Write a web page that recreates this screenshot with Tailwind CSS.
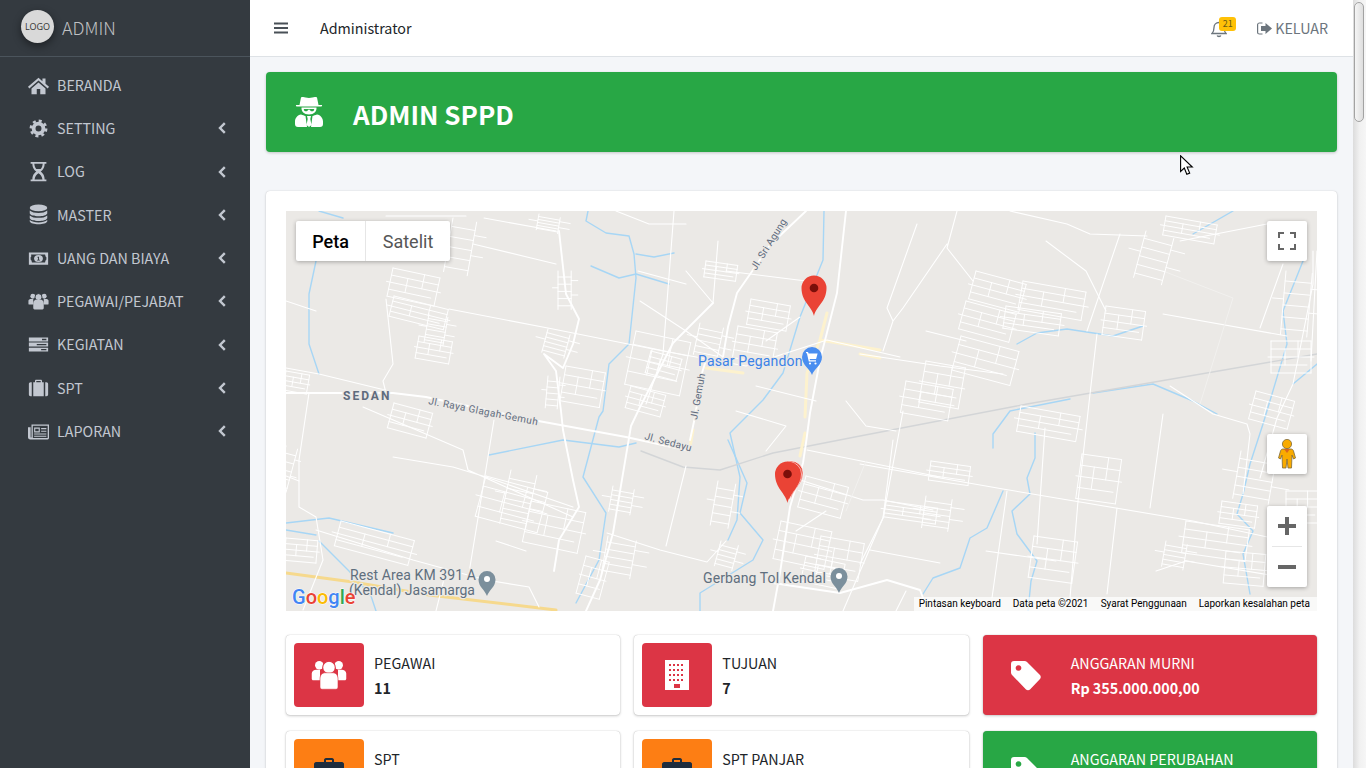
<!DOCTYPE html>
<html lang="id">
<head>
  <meta charset="UTF-8">
  <title>Admin SPPD</title>
  <script src="https://cdn.jsdelivr.net/npm/@tailwindcss/browser@4"></script>
</head>
<body class="bg-[#f4f6f9] font-['Noto_Sans_CJK_JP',sans-serif] text-[#212529] overflow-hidden">
  <div class="flex h-screen overflow-hidden relative">
    <!-- Sidebar -->
    <aside class="w-[250px] shrink-0 bg-[#343a40] text-[#c2c7d0] flex flex-col">
      <div class="h-[57px] shrink-0 border-b border-[#4b545c] flex items-center pl-[21px]">
        <div class="w-[33px] h-[33px] -mt-[3px] rounded-full bg-[#d9d9d9] shadow-[0_3px_8px_rgba(0,0,0,0.45)] flex items-center justify-center text-[9px] leading-none text-[#333] font-['Open_Sans',sans-serif]">LOGO</div>
        <span class="ml-2 text-[17.8px] leading-none font-light text-white/70">ADMIN</span>
      </div>
      <nav class="pt-[6.5px] text-[14.3px]">
        <a class="h-[43.25px] flex items-center pl-[28px]">
          <svg class="w-[21px] h-[21px]" viewBox="0 0 24 24" fill="currentColor"><path d="M12 3 0 13.5l1.5 1.8L12 6.2l10.5 9.1 1.5-1.8-4-3.5V4h-3.5v3z"/><path d="M4 15.5 12 8.6l8 6.9V22h-6v-6h-4v6H4z"/></svg>
          <span class="ml-2 leading-none">BERANDA</span>
        </a>
        <a class="h-[43.25px] flex items-center pl-[28px]">
          <svg class="w-[21px] h-[21px]" viewBox="0 0 24 24" fill="none" stroke="currentColor"><circle cx="12" cy="12" r="5.6" stroke-width="4.4"/><circle cx="12" cy="12" r="8.7" stroke-width="3" stroke-dasharray="3.4 3.43"/></svg>
          <span class="ml-2 leading-none">SETTING</span>
          <svg class="ml-auto mr-[24px] w-2 h-3" viewBox="0 0 8 12" fill="none" stroke="currentColor" stroke-width="2.4"><path d="M6.8 1.2 2 6l4.8 4.8"/></svg>
        </a>
        <a class="h-[43.25px] flex items-center pl-[28px]">
          <svg class="w-[21px] h-[21px]" viewBox="0 0 24 24" fill="currentColor" fill-rule="evenodd"><path d="M3 1h18v2h-2c0 5-2.5 7.5-4.5 9 2 1.5 4.5 4 4.5 9h2v2H3v-2h2c0-5 2.5-7.500 4.500-9C7.500 10.500 5 8 5 3H3zm4.200 2c.2 2.500 1 4.500 2.300 6h5c1.300-1.500 2.100-3.500 2.300-6zM12 14c-2 1.200-4 3.500-4.500 7h9c-.5-3.500-2.500-5.800-4.500-7z"/></svg>
          <span class="ml-2 leading-none">LOG</span>
          <svg class="ml-auto mr-[24px] w-2 h-3" viewBox="0 0 8 12" fill="none" stroke="currentColor" stroke-width="2.4"><path d="M6.8 1.2 2 6l4.8 4.8"/></svg>
        </a>
        <a class="h-[43.25px] flex items-center pl-[28px]">
          <svg class="w-[21px] h-[21px]" viewBox="0 0 24 24" fill="currentColor"><ellipse cx="12" cy="4.5" rx="10" ry="3.8"/><path d="M2 7.500c2 2 6 2.800 10 2.800s8-.8 10-2.800v3.300c-1 2-5 3.200-10 3.200S3 12.800 2 10.800z"/><path d="M2 13c2 2 6 2.800 10 2.800S20 15 22 13v3.300c-1 2-5 3.200-10 3.200S3 18.300 2 16.300z"/><path d="M2 18.300c2 2 6 2.700 10 2.700s8-.7 10-2.700v1.700c-1 2-5 3.200-10 3.200S3 22 2 20z"/></svg>
          <span class="ml-2 leading-none">MASTER</span>
          <svg class="ml-auto mr-[24px] w-2 h-3" viewBox="0 0 8 12" fill="none" stroke="currentColor" stroke-width="2.4"><path d="M6.8 1.2 2 6l4.8 4.8"/></svg>
        </a>
        <a class="h-[43.25px] flex items-center pl-[28px]">
          <svg class="w-[21px] h-[21px]" viewBox="0 0 24 24" fill="currentColor" fill-rule="evenodd"><path d="M1 5h22v14H1zm2.500 2.500C4 10 3.500 10.500 3 10.500v3c.5 0 1 .5 1.500 3h15c.5-2.500 1-3 1.500-3v-3c-.5 0-1-.5-1.500-3z"/><ellipse cx="12" cy="12" rx="5" ry="4"/><path d="M11 10h1.600v3.500h1v.8h-3.200v-.8h1.100v-2.500h-.7z" fill="#343a40"/></svg>
          <span class="ml-2 leading-none">UANG DAN BIAYA</span>
          <svg class="ml-auto mr-[24px] w-2 h-3" viewBox="0 0 8 12" fill="none" stroke="currentColor" stroke-width="2.4"><path d="M6.8 1.2 2 6l4.8 4.8"/></svg>
        </a>
        <a class="h-[43.25px] flex items-center pl-[28px]">
          <svg class="w-[21px] h-[21px]" viewBox="0 0 24 24" fill="currentColor"><circle cx="5.5" cy="6" r="2.8"/><circle cx="18.5" cy="6" r="2.8"/><path d="M.5 11c0-1.500 1.500-2 3-2h2.500v6.500H1.500c-.6 0-1-.4-1-1zM23.500 11c0-1.500-1.500-2-3-2H18v6.500h4.500c.6 0 1-.4 1-1z"/><circle cx="12" cy="7" r="4" stroke="#343a40"/><path d="M6 14c0-2.500 1.500-4 3.500-4h5c2 0 3.500 1.500 3.500 4v5.500c0 1-.6 1.500-1.500 1.500h-9c-.9 0-1.500-.5-1.500-1.500z"/></svg>
          <span class="ml-2 leading-none">PEGAWAI/PEJABAT</span>
          <svg class="ml-auto mr-[24px] w-2 h-3" viewBox="0 0 8 12" fill="none" stroke="currentColor" stroke-width="2.4"><path d="M6.8 1.2 2 6l4.8 4.8"/></svg>
        </a>
        <a class="h-[43.25px] flex items-center pl-[28px]">
          <svg class="w-[21px] h-[21px]" viewBox="0 0 24 24" fill="currentColor" fill-rule="evenodd"><path d="M1 4h22v4.500H1zm15 1.500v1.500h5V5.500zM1 9.800h22v4.500H1zm9 1.500v1.500h11v-1.500zM1 15.600h22V20H1zm14 1.400v1.500h6V17z"/></svg>
          <span class="ml-2 leading-none">KEGIATAN</span>
          <svg class="ml-auto mr-[24px] w-2 h-3" viewBox="0 0 8 12" fill="none" stroke="currentColor" stroke-width="2.4"><path d="M6.8 1.2 2 6l4.8 4.8"/></svg>
        </a>
        <a class="h-[43.25px] flex items-center pl-[28px]">
          <svg class="w-[21px] h-[21px]" viewBox="0 0 24 24" fill="currentColor"><path d="M8 7V4.500C8 3.500 8.500 3 9.500 3h5c1 0 1.500.5 1.500 1.500V7h-1.500V4.500h-5V7z"/><path d="M6 6h12v16H6z"/><path d="M1 8c0-1.200.8-2 2-2h1.300v16H3c-1.200 0-2-.8-2-2zM23 8c0-1.200-.8-2-2-2h-1.300v16H21c1.200 0 2-.8 2-2z"/></svg>
          <span class="ml-2 leading-none">SPT</span>
          <svg class="ml-auto mr-[24px] w-2 h-3" viewBox="0 0 8 12" fill="none" stroke="currentColor" stroke-width="2.4"><path d="M6.8 1.2 2 6l4.8 4.8"/></svg>
        </a>
        <a class="h-[43.25px] flex items-center pl-[28px]">
          <svg class="w-[21px] h-[21px]" viewBox="0 0 24 24" fill="currentColor" fill-rule="evenodd"><path d="M4 4h20v15.500c0 .8-.6 1.500-1.500 1.500h-20C1 21 0 20 0 18.500V7h3v11.500c0 .5 1 .5 1 0zm1.500 1.500v13.900h17V5.500zM7 7.500h6.500V13H7zm1.300 1.300v2.900h3.900V8.800zM15 8h6v1.300h-6zm0 3h6v1.300h-6zM7 14.200h14v1.300H7zm0 2.600h14v1.300H7z"/></svg>
          <span class="ml-2 leading-none">LAPORAN</span>
          <svg class="ml-auto mr-[24px] w-2 h-3" viewBox="0 0 8 12" fill="none" stroke="currentColor" stroke-width="2.4"><path d="M6.8 1.2 2 6l4.8 4.8"/></svg>
        </a>
      </nav>
    </aside>

    <!-- Main -->
    <div class="flex-1 min-w-0 flex flex-col overflow-hidden">
      <header class="h-[57px] shrink-0 bg-white border-b border-[#dee2e6] flex items-center pl-6 pr-[25px]">
        <svg class="w-[14px] h-[14px]" viewBox="0 0 14 14" fill="#495057"><path d="M0 1.500h14v2H0zM0 6h14v2H0zM0 10.500h14v2H0z"/></svg>
        <span class="ml-[32px] text-[14.3px] leading-none">Administrator</span>
        <div class="ml-auto relative w-[26px] h-[26px] mr-[20px]">
          <svg class="absolute left-0 top-[5px] w-[16px] h-[18px]" viewBox="0 0 16 18" fill="none" stroke="#6c757d" stroke-width="1.300"><path d="M1 13.500c1.500-1.500 2-3 2-6 0-3 2-5 5-5s5 2 5 5c0 3 .5 4.500 2 6z"/><path d="M6.200 15.500c.3 1.300 3.300 1.300 3.600 0"/></svg>
          <span class="absolute left-[8px] top-[1.5px] w-[17px] h-[14px] rounded-[3px] bg-[#ffc107] text-[#6b5a14] text-[9px] leading-[14px] text-center">21</span>
        </div>
        <svg class="w-[15px] h-[13px]" viewBox="0 0 15 13" fill="#6c757d"><path d="M5.500 1.500H2.500C1.700 1.500 1.200 2 1.200 2.800v7.400c0 .8.500 1.300 1.300 1.300h3v1h-3C1.100 12.500 0 11.500 0 10.200V2.800C0 1.500 1.100.5 2.500.5h3z"/><path d="M8.500 1 15 6.500 8.500 12V9H4V4h4.500z"/></svg>
        <span class="ml-[3px] text-[14.3px] leading-none text-[#6c757d]">KELUAR</span>
      </header>

      <main class="px-4 pt-[15px]">
        <div class="h-[80px] bg-[#28a745] rounded-[4px] shadow-[0_1px_3px_rgba(0,0,0,0.2)] flex items-center text-white">
          <svg class="ml-[29px] w-[28px] h-[30px]" viewBox="0 0 28 30" fill="#fff" fill-rule="evenodd"><path d="M6 .5C7.500-1 10 1 14 1s6.500-2 8-.5L23.500 8H27c.3 1-.5 1.500-1 1.500H2C1.500 9.500.7 9 1 8h3.500z"/><path d="M6.500 10.500h15c.3 4-2.500 7-7.500 7s-7.800-3-7.500-7zm2.300 1.500c0 1.500.8 2.300 2.200 2.300 1.200 0 1.700-.6 2-1.600h2c.3 1 .8 1.600 2 1.600 1.400 0 2.200-.8 2.200-2.300z"/><path d="M6 17.500c2 .5 3 1 4.500 1.500l1.500 11H3c-2 0-3-1-3-3v-2.500C0 21 2.500 18 6 17.500zM22 17.500c-2 .5-3 1-4.500 1.500L16 30h9c2 0 3-1 3-3v-2.500c0-3.500-2.500-6.500-6-7zM12 19h4l-.7 3 1.200 6-2.500 2-2.500-2 1.200-6z"/></svg>
          <h1 class="ml-[30px] mt-[3px] text-[26px] leading-none font-bold">ADMIN SPPD</h1>
        </div>

        <section class="mt-[39px] bg-white rounded-[4px] shadow-[0_0_1px_rgba(0,0,0,0.2),0_1px_3px_rgba(0,0,0,0.15)] p-5">
          <!-- Map -->
          <div class="relative h-[400px] overflow-hidden bg-[#ebe9e6] font-['Roboto',sans-serif]">
            <svg class="absolute inset-0 w-full h-full" viewBox="0 0 1031 400" fill="none" stroke-linejoin="round" stroke-linecap="round">
              <defs>
                <path id="b" vector-effect="non-scaling-stroke" d="M0 0H40M0 8H40M-3 16H43M0 24H36M0 32H40M0 0V32M40 0V32M14 8V24M27 0V16"/>
                <path id="c" vector-effect="non-scaling-stroke" d="M0 0V32M12 0V32M0 5H12M0 11H12M0 17H12M0 23H12M0 29H12M12 8H18M12 20H18M-5 14H0"/>
              </defs>
              <!-- rivers -->
              <g stroke="#a7d6f5" stroke-width="1.400">
                <path d="M302 0 300 10 320 22 343 25 348 43 350 67 343 133 323 153 317 200 313 206 297 266 320 302 313 349 290 392"/>
                <path d="M538 0 537 49 514 106 497 162 477 189 444 222 454 266 451 309 442 329"/>
                <path d="M442 229 461 272 454 302 477 329 467 349 414 382 414 400"/>
                <path d="M33 0 57 7M30 50 23 83 23 133 33 163M0 312 43 307 107 322M0 319 30 324M33 330 63 360 85 385 90 400"/>
                <path d="M203 244 277 229 333 236 350 232M350 43 368 46 388 42M305 55 333 67 350 63 383 73"/>
                <path d="M731 133 751 122 781 118 827 125 857 115M707 237 707 223 724 200 784 188M807 182 867 173 907 190 931 203"/>
                <path d="M749 222 749 247 741 267 744 283 726 300 731 323 751 350 745 370 742 400M717 280 701 317 684 327 674 357 647 367 637 383"/>
                <path d="M1017 50 997 100 1001 133 977 213 964 253 957 283 951 303 967 320 957 343 964 383M907 23 947 0M1031 153 1007 173"/>
              </g>
              <!-- railway -->
              <path stroke="#d3d5d7" stroke-width="1.400" d="M1031 143 741 193 574 225 487 242 434 259 397 256 355 240"/>
              <!-- yellow roads -->
              <g stroke="#fdf2ce" stroke-width="3">
                <path d="M541 102 534 129 521 162 519 206M534 129 594 139M420 157 457 162M407 219 404 236M519 222 514 245M574 143 594 147"/>
              </g>
              <path stroke="#f6d98d" stroke-width="3" d="M0 362 67 371 143 384 270 399"/>
              <!-- main roads -->
              <g stroke="#fff" stroke-width="1.900">
                <path d="M0 182 107 182 140 186 247 209 340 226 404 240"/>
                <path d="M520 0 484 34 467 59 451 82 442 116 437 146M420 149 416 162 409 206 404 229"/>
                <path d="M427 92 387 132 354 196 345 215 327 322 314 369 300 400"/>
                <path d="M560 0 551 82 534 149 524 202 520 232 517 252 504 296 494 362 487 400"/>
                <path d="M487 372 554 382 601 369 634 379 640 395"/>
                <path d="M273 20 280 83 293 108 287 133 277 157 258 143 270 160 275 200 277 219 287 269 293 296 273 329 268 360"/>
              </g>
              <!-- minor roads -->
              <g stroke="#fff" stroke-width="1.100">
                <path d="M163 98 267 118 377 140 460 155 541 129 614 146M574 143 654 155 717 163M0 157 33 163 103 180"/>
                <path d="M574 253 717 278 907 310 1000 330M877 103 1001 125M811 123 804 183 792 290 784 387M834 23 801 120"/>
                <path d="M724 0 781 13 804 23 861 25M894 30 981 13M671 0 661 37 687 70M631 13 601 97 607 110 597 140M661 33 617 97 607 110"/>
                <path d="M617 200 597 307 574 353M877 203 864 297M831 297 821 383M721 280 706 387M759 217 751 333"/>
                <path d="M884 175 927 203 961 213 964 223 957 283M1027 40 1027 73 1007 173 991 207 974 267M997 53 974 117"/>
                <path d="M521 239 654 266M514 269 577 289 597 289 647 299M597 307 557 400M607 229 597 307M584 339 654 352"/>
                <path d="M23 182 13 249 13 296 30 306 37 349 17 399M100 88 107 153 97 170 100 182M208 209 183 362"/>
                <path d="M77 196 177 239 182 259 287 306M107 246 167 256 200 266 287 296M30 319 127 349 200 369 243 376 253 396"/>
                <path d="M100 5 180 5M198 7 270 20M187 33 270 53M388 0 377 143 360 193M330 0 363 13 400 13M352 60 400 73"/>
                <path d="M321 322 374 339 421 351 440 330M400 60 427 92 432 30M354 90 400 120 437 146M400 255 380 335M540 300 510 320"/>
                <path d="M480 130 514 106M440 60 520 70M470 175 530 190M450 200 500 215 480 240M560 190 580 215 610 220"/>
                <path d="M0 90 30 100M0 265 13 270M700 340 770 350M870 360 900 350 990 365M1031 40 1025 150"/>
                <path d="M210 330 240 340M160 360 150 400M640 120 680 130M760 30 800 60 820 100M620 380 610 400"/>
              </g>
              <path stroke="#f2f1ef" stroke-width="1" d="M877 60 947 87 914 193M560 300 580 250"/>
              <!-- street blocks -->
              <g stroke="#fff" stroke-width="1">
                <use href="#b" transform="translate(107 57) rotate(12) scale(1.2 .9)"/>
                <use href="#c" transform="translate(167 7) rotate(10) scale(2 1.7)"/>
                <use href="#b" transform="translate(108 85) rotate(14) scale(1.4 .65)"/>
                <use href="#c" transform="translate(143 103) rotate(10) scale(1.6 .9)"/>
                <use href="#b" transform="translate(133 125) rotate(10) scale(.85 .7)"/>
                <use href="#c" transform="translate(253 3) rotate(10) scale(1.8 .5)"/>
                <use href="#c" transform="translate(272 60) scale(1.1 1.2)"/>
                <use href="#c" transform="translate(262 118) rotate(15) scale(1.9 .75)"/>
                <use href="#b" transform="translate(280 155) rotate(10) scale(1 1.1)"/>
                <use href="#c" transform="translate(262 165) rotate(5) scale(1 1)"/>
                <use href="#b" transform="translate(345 175) rotate(15) scale(.9 .7)"/>
                <use href="#b" transform="translate(365 140) rotate(15) scale(.8 .7)"/>
                <use href="#b" transform="translate(0 160) rotate(10) scale(.6 .6)"/>
                <use href="#b" transform="translate(108 192) rotate(15) scale(1 .8)"/>
                <use href="#b" transform="translate(200 265) rotate(15) scale(1.6 1.3)"/>
                <use href="#c" transform="translate(225 259) rotate(12) scale(2.2 1.7)"/>
                <use href="#b" transform="translate(245 290) rotate(12) scale(1.4 1.3)"/>
                <use href="#b" transform="translate(55 310) rotate(15) scale(1.9 .8)"/>
                <use href="#b" transform="translate(0 327) rotate(5) scale(.8 .7)"/>
                <use href="#c" transform="translate(0 235) rotate(15) scale(1 1.4)"/>
                <use href="#b" transform="translate(350 120) rotate(12) scale(1.4 1.7)"/>
                <use href="#b" transform="translate(452 115) rotate(10) scale(1 1)"/>
                <use href="#b" transform="translate(465 88) rotate(10) scale(1 .8)"/>
                <use href="#c" transform="translate(414 112) rotate(12) scale(2 1)"/>
                <use href="#b" transform="translate(420 50) rotate(8) scale(.8 .5)"/>
                <use href="#b" transform="translate(520 265) rotate(15) scale(1.1 1)"/>
                <use href="#b" transform="translate(535 325) rotate(10) scale(1.1 1.2)"/>
                <use href="#b" transform="translate(495 310) rotate(12) scale(1.3 1.2)"/>
                <use href="#b" transform="translate(520 345) rotate(12) scale(1 .8)"/>
                <use href="#c" transform="translate(432 270) rotate(10) scale(1.5 1.4)"/>
                <use href="#c" transform="translate(435 330) rotate(15) scale(1.5 .8)"/>
                <use href="#c" transform="translate(322 325) rotate(10) scale(2.4 1.2)"/>
                <use href="#c" transform="translate(327 275) rotate(10) scale(1.8 .8)"/>
                <use href="#b" transform="translate(300 345) rotate(15) scale(.6 1.2)"/>
                <use href="#b" transform="translate(690 60) rotate(15) scale(1.3 .9)"/>
                <use href="#b" transform="translate(680 90) rotate(15) scale(1.3 .9)"/>
                <use href="#b" transform="translate(675 125) rotate(15) scale(1.5 1.1)"/>
                <use href="#b" transform="translate(737 70) rotate(10) scale(1.6 .9)"/>
                <use href="#b" transform="translate(720 95) rotate(8) scale(1.4 .7)"/>
                <use href="#b" transform="translate(820 95) rotate(8) scale(1 .9)"/>
                <use href="#c" transform="translate(860 20) rotate(15) scale(2.4 1.5)"/>
                <use href="#b" transform="translate(880 5) rotate(10) scale(1.3 .6)"/>
                <use href="#b" transform="translate(640 150) rotate(10) scale(1 1.3)"/>
                <use href="#b" transform="translate(620 170) rotate(10) scale(1.2 1)"/>
                <use href="#b" transform="translate(735 195) rotate(10) scale(1.5 .8)"/>
                <use href="#b" transform="translate(796 243) rotate(8) scale(1 1.4)"/>
                <use href="#b" transform="translate(645 250) rotate(8) scale(1 .6)"/>
                <use href="#c" transform="translate(640 285) rotate(8) scale(2.2 1)"/>
                <use href="#b" transform="translate(600 290) rotate(8) scale(1.3 .5)"/>
                <use href="#b" transform="translate(748 325) rotate(8) scale(1.1 1.3)"/>
                <use href="#b" transform="translate(900 310) rotate(8) scale(1.6 1)"/>
                <use href="#c" transform="translate(880 330) rotate(10) scale(1.8 .8)"/>
                <use href="#b" transform="translate(936 290) rotate(8) scale(.9 .7)"/>
                <use href="#c" transform="translate(955 240) rotate(10) scale(3 1.5)"/>
                <use href="#b" transform="translate(970 180) rotate(15) scale(1 .9)"/>
                <use href="#c" transform="translate(1000 60) rotate(5) scale(2.2 2)"/>
                <use href="#b" transform="translate(985 130) scale(1 1)"/>
                <use href="#b" transform="translate(940 340) rotate(5) scale(1 1)"/>
                <use href="#b" transform="translate(1000 280) scale(.8 1)"/>
              </g>
              <!-- labels -->
              <g stroke="#ebe9e6" stroke-width="2.500" paint-order="stroke" font-family="Roboto, sans-serif">
                <text x="412" y="155" font-size="14" letter-spacing=".15" fill="#3b82e8">Pasar Pegandon</text>
                <text x="64" y="369" font-size="14" letter-spacing=".1" fill="#5f6f7e">Rest Area KM 391 A</text>
                <text x="63" y="384" font-size="14" fill="#5f6f7e">(Kendal) Jasamarga</text>
                <text x="417" y="372" font-size="14" letter-spacing=".1" fill="#5f6f7e">Gerbang Tol Kendal</text>
                <text x="57" y="189" font-size="12" font-weight="700" letter-spacing="2" fill="#5f6b7d">SEDAN</text>
                <text font-size="10" letter-spacing=".4" fill="#5f6b7d" transform="translate(142 193) rotate(11)">Jl. Raya Glagah-Gemuh</text>
                <text font-size="10" letter-spacing=".3" fill="#5f6b7d" transform="translate(358 228) rotate(15)">Jl. Sedayu</text>
                <text font-size="10" letter-spacing=".2" fill="#5f6b7d" transform="translate(411 209) rotate(-80)">Jl. Gemuh</text>
                <text font-size="10" letter-spacing=".2" fill="#5f6b7d" transform="translate(470 60) rotate(-58)">Jl. Sri Agung</text>
              </g>
              <!-- place pins -->
              <path fill="#4a8ef0" d="M526 164c-2-6-10-10-10-18a10 10 0 0 1 20 0c0 8-8 12-10 18z"/>
              <path fill="#fff" d="M520 141h2l.6 1.500h9l-1.500 5.500h-6.500l.4 1.300h6v1.200h-7.200l-1.900-8.300H520z"/>
              <circle cx="524" cy="152.5" r="1.1" fill="#fff"/><circle cx="529.5" cy="152.5" r="1.1" fill="#fff"/>
              <path fill="#7b8f9c" d="M201 385c-2-6-8.500-9-8.500-16.500a8.500 8.500 0 0 1 17 0c0 7.500-6.500 10.500-8.500 16.500z"/>
              <circle cx="201" cy="368" r="3" fill="#fff"/>
              <path fill="#7b8f9c" d="M553 382c-2-6-8.500-9-8.500-16.500a8.500 8.500 0 0 1 17 0c0 7.500-6.500 10.500-8.500 16.500z"/>
              <circle cx="553" cy="365" r="3" fill="#fff"/>
              <!-- markers -->
              <g stroke="#fff" stroke-width=".6">
                <path fill="#ea4335" d="M505 288c-2-10-12-14-12-26a12 12 0 0 1 24 0c0 12-10 16-12 26z"/>
                <path fill="#ea4335" d="M503.500 289c-2-10-12-14-12-26a12 12 0 0 1 24 0c0 12-10 16-12 26z"/>
              </g>
              <path fill="#ea4335" d="M501.500 292c-2-10-12.500-15-12.500-29a12.500 12.500 0 0 1 25 0c0 14-10.500 19-12.500 29z"/>
              <circle cx="501.500" cy="263" r="4.300" fill="#7b0f0a"/>
              <path fill="#ea4335" d="M528 105c-2-10-12.500-14-12.500-28a12.500 12.500 0 0 1 25 0c0 14-10.500 18-12.500 28z"/>
              <circle cx="528" cy="77" r="4.300" fill="#7b0f0a"/>
              <!-- google logo -->
              <text x="6" y="393" font-size="20" font-weight="500" font-family="Roboto, sans-serif" stroke="#fff" stroke-width="1" paint-order="stroke"><tspan fill="#4285f4">G</tspan><tspan fill="#ea4335">o</tspan><tspan fill="#fbbc05">o</tspan><tspan fill="#4285f4">g</tspan><tspan fill="#34a853">l</tspan><tspan fill="#ea4335">e</tspan></text>
            </svg>

            <div class="absolute left-[10px] top-[10px] h-10 flex bg-white rounded-[2px] shadow-[0_1px_4px_rgba(0,0,0,0.3)] text-[18px]">
              <div class="w-[70px] flex items-center justify-center font-medium text-black border-r border-[#e6e6e6]">Peta</div>
              <div class="w-[84px] flex items-center justify-center text-[#565656]">Satelit</div>
            </div>
            <div class="absolute right-[10px] top-[10px] w-10 h-10 bg-white rounded-[2px] shadow-[0_1px_4px_rgba(0,0,0,0.3)] flex items-center justify-center">
              <svg class="w-[18px] h-[18px]" viewBox="0 0 18 18" fill="none" stroke="#666" stroke-width="2"><path d="M1 6V1h5M12 1h5v5M17 12v5h-5M6 17H1v-5"/></svg>
            </div>
            <div class="absolute right-[10px] top-[223px] w-10 h-10 bg-white rounded-[2px] shadow-[0_1px_4px_rgba(0,0,0,0.3)] flex items-center justify-center">
              <svg class="w-[18px] h-[30px]" viewBox="0 0 18 30" fill="#f9ab00" stroke="#7d6a3a" stroke-width=".8"><circle cx="9" cy="5" r="4.6"/><path d="M5 10h8c1.500 0 2.200 1 2.500 2l2 7-2 1-1.500-4-.5 13H10l-1-9-1 9H4.500L4 16l-1.500 4-2-1 2-7c.3-1 1-2 2.500-2z"/><path d="M6 10l3 4 3-4z" fill="#d9661f" stroke="none"/></svg>
            </div>
            <div class="absolute right-[10px] top-[295px] w-10 h-[81px] bg-white rounded-[2px] shadow-[0_1px_4px_rgba(0,0,0,0.3)] flex flex-col items-center">
              <div class="h-10 flex items-center justify-center">
                <svg class="w-[18px] h-[18px]" viewBox="0 0 18 18" fill="#666"><path d="M7 0h4v7h7v4h-7v7H7v-7H0V7h7z"/></svg>
              </div>
              <div class="w-[30px] h-px bg-[#e6e6e6]"></div>
              <div class="h-10 flex items-center justify-center">
                <svg class="w-[18px] h-[18px]" viewBox="0 0 18 18" fill="#666"><path d="M0 7h18v4H0z"/></svg>
              </div>
            </div>
            <div class="absolute right-0 bottom-0 h-[14px] pl-[5px] pr-[7px] bg-white/70 flex items-center text-[10px] leading-none text-black whitespace-nowrap">
              <span class="w-[94px]">Pintasan keyboard</span>
              <span class="w-[88px]">Data peta ©2021</span>
              <span class="w-[98px]">Syarat Penggunaan</span>
              <span>Laporkan kesalahan peta</span>
            </div>
          </div>

          <!-- Stat boxes -->
          <div class="mt-6 grid grid-cols-3 gap-x-[14px] gap-y-4">
            <div class="h-20 bg-white rounded-[4px] shadow-[0_0_1px_rgba(0,0,0,0.3),0_1px_3px_rgba(0,0,0,0.2)] p-2 flex">
              <div class="w-[70px] shrink-0 rounded-[4px] bg-[#dc3545] flex items-center justify-center">
                <svg class="w-[36px] h-[36px]" viewBox="0 0 24 24" fill="#fff"><circle cx="5.5" cy="5.5" r="2.8"/><circle cx="18.5" cy="5.5" r="2.8"/><path d="M.5 11c0-1.500 1.500-2.500 3-2.500h2.500v7H1.500c-.6 0-1-.4-1-1zM23.500 11c0-1.500-1.500-2.500-3-2.500H18v7h4.500c.6 0 1-.4 1-1z"/><circle cx="12" cy="7" r="4.2" stroke="#dc3545" stroke-width=".7"/><path d="M6 14.500c0-2.500 1.500-4 3.500-4h5c2 0 3.500 1.500 3.500 4V20c0 1-.6 1.500-1.500 1.500h-9C6.600 21.500 6 21 6 20z" stroke="#dc3545" stroke-width=".4"/></svg>
              </div>
              <div class="ml-[10px] flex flex-col text-[14.3px]">
                <span class="mt-[7px] leading-[25px]">PEGAWAI</span>
                <span class="leading-[25px] font-bold">11</span>
              </div>
            </div>
            <div class="h-20 bg-white rounded-[4px] shadow-[0_0_1px_rgba(0,0,0,0.3),0_1px_3px_rgba(0,0,0,0.2)] p-2 flex">
              <div class="w-[70px] shrink-0 rounded-[4px] bg-[#dc3545] flex items-center justify-center">
                <svg class="w-[24px] h-[30px]" viewBox="0 0 24 30" fill="#fff" fill-rule="evenodd"><path d="M0 0h24v30H0zM4 4v2h2V4zm4 0v2h2V4zm4 0v2h2V4zm4 0v2h2V4zM4 9v2h2V9zm4 0v2h2V9zm4 0v2h2V9zm4 0v2h2V9zM4 14v2h2v-2zm4 0v2h2v-2zm4 0v2h2v-2zm4 0v2h2v-2zM4 19v2h2v-2zm4 0v2h2v-2zm4 0v2h2v-2zm4 0v2h2v-2zM9 24v4h6v-4z"/></svg>
              </div>
              <div class="ml-[10px] flex flex-col text-[14.3px]">
                <span class="mt-[7px] leading-[25px]">TUJUAN</span>
                <span class="leading-[25px] font-bold">7</span>
              </div>
            </div>
            <div class="h-20 bg-[#dc3545] text-white rounded-[4px] shadow-[0_0_1px_rgba(0,0,0,0.3),0_1px_3px_rgba(0,0,0,0.2)] p-2 flex">
              <div class="w-[70px] shrink-0 flex items-center justify-center">
                <svg class="w-[32px] h-[32px]" viewBox="0 0 32 32" fill="#fff" fill-rule="evenodd"><path d="M1 5c0-2 1-3 3-3h10.500c1 0 1.800.3 2.500 1l13 13c1 1 1 3 0 4L20 30.500c-1 1-3 1-4 0L3 17c-1-1-2-2-2-3.500zm7.500 1.200a2.800 2.800 0 1 0 .01 0z"/></svg>
              </div>
              <div class="ml-[10px] flex flex-col text-[14.3px]">
                <span class="mt-[7px] leading-[25px]">ANGGARAN MURNI</span>
                <span class="leading-[25px] font-bold">Rp 355.000.000,00</span>
              </div>
            </div>
            <div class="h-20 bg-white rounded-[4px] shadow-[0_0_1px_rgba(0,0,0,0.3),0_1px_3px_rgba(0,0,0,0.2)] p-2 flex">
              <div class="w-[70px] shrink-0 rounded-[4px] bg-[#fd7e14] flex items-center justify-center">
                <svg class="w-[30px] h-[30px]" viewBox="0 0 30 30" fill="#1f2d3d"><path d="M10 6V4c0-1 .8-2 2-2h6c1.200 0 2 1 2 2v2h-2V4h-6v2z"/><path d="M2 6h26c1 0 2 1 2 2v7H0V8c0-1 1-2 2-2zM0 17h12v2h6v-2h12v9c0 1-1 2-2 2H2c-1 0-2-1-2-2z"/></svg>
              </div>
              <div class="ml-[10px] flex flex-col text-[14.3px]">
                <span class="mt-[7px] leading-[25px]">SPT</span>
              </div>
            </div>
            <div class="h-20 bg-white rounded-[4px] shadow-[0_0_1px_rgba(0,0,0,0.3),0_1px_3px_rgba(0,0,0,0.2)] p-2 flex">
              <div class="w-[70px] shrink-0 rounded-[4px] bg-[#fd7e14] flex items-center justify-center">
                <svg class="w-[30px] h-[30px]" viewBox="0 0 30 30" fill="#1f2d3d"><path d="M10 6V4c0-1 .8-2 2-2h6c1.200 0 2 1 2 2v2h-2V4h-6v2z"/><path d="M2 6h26c1 0 2 1 2 2v7H0V8c0-1 1-2 2-2zM0 17h12v2h6v-2h12v9c0 1-1 2-2 2H2c-1 0-2-1-2-2z"/></svg>
              </div>
              <div class="ml-[10px] flex flex-col text-[14.3px]">
                <span class="mt-[7px] leading-[25px]">SPT PANJAR</span>
              </div>
            </div>
            <div class="h-20 bg-[#28a745] text-white rounded-[4px] shadow-[0_0_1px_rgba(0,0,0,0.3),0_1px_3px_rgba(0,0,0,0.2)] p-2 flex">
              <div class="w-[70px] shrink-0 flex items-center justify-center">
                <svg class="w-[32px] h-[32px]" viewBox="0 0 32 32" fill="#fff" fill-rule="evenodd"><path d="M1 5c0-2 1-3 3-3h10.500c1 0 1.800.3 2.500 1l13 13c1 1 1 3 0 4L20 30.500c-1 1-3 1-4 0L3 17c-1-1-2-2-2-3.500zm7.500 1.200a2.800 2.800 0 1 0 .01 0z"/></svg>
              </div>
              <div class="ml-[10px] flex flex-col text-[14.3px]">
                <span class="mt-[7px] leading-[25px]">ANGGARAN PERUBAHAN</span>
              </div>
            </div>
          </div>
        </section>
      </main>
    </div>

    <!-- Scrollbar -->
    <div class="w-[13px] shrink-0 h-full bg-gradient-to-r from-[#dcdcdc] via-[#f1f1f1] to-[#f6f6f6] pl-[1px] pt-[2px]">
      <div class="w-[10px] h-[120px] rounded-[5px] border border-[#a3a3a3] bg-gradient-to-r from-[#f5f5f5] to-[#dedede]"></div>
    </div>

    <!-- Mouse cursor -->
    <svg class="absolute left-[1180px] top-[155px] w-[14px] h-[21px]" viewBox="0 0 14 21" fill="#fff" stroke="#000" stroke-width="1.100"><path d="M.6.8v15.700l3.700-3.500 2.500 6.300 2.900-1.200-2.600-6.100h5.200z"/></svg>
  </div>
</body>
</html>
